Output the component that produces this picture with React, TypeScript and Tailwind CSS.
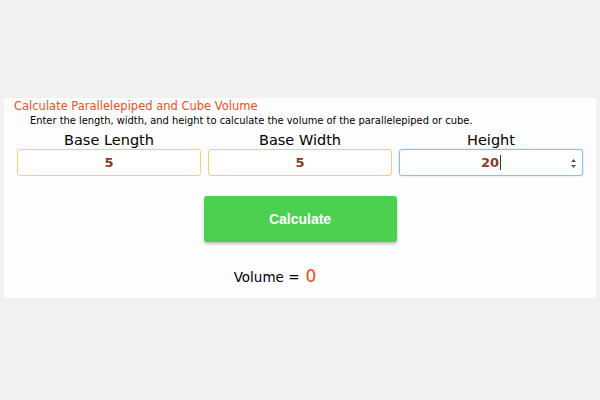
import React from 'react';

const comic = { fontFamily: '"Comic Sans MS", "DejaVu Sans", sans-serif' };

interface FieldProps {
  label: string;
  value: string;
  focused?: boolean;
}

const Field: React.FC<FieldProps> = ({ label, value, focused }) => {
  return (
    <div className="flex flex-col items-center">
      <label className="text-[14.5px] leading-[17px] text-black">{label}</label>
      <div
        className={`relative w-full h-[27px] rounded-[3px] bg-white flex items-center justify-center border ${
          focused ? 'border-[#8cc0e6] shadow-[0_0_2px_#a9d3f2]' : 'border-[#f5cf7e]'
        }`}
      >
        <span className="text-[13px] font-semibold text-[#8a3c1e]">{value}</span>
        {focused && <span className="w-px h-[15px] bg-[#333] ml-px"></span>}
        {focused && (
          <svg className="absolute right-[5px] top-[7px]" width="7" height="13" viewBox="0 0 7 13">
            <path d="M1 5 L3.5 2 L6 5 Z" fill="#555" />
            <path d="M1 8 L3.5 11 L6 8 Z" fill="#555" />
          </svg>
        )}
      </div>
    </div>
  );
};

export default function App() {
  return (
    <div className="w-[600px] h-[400px] bg-[#f1f1f1] pt-[98px] px-[4px]" style={comic}>
      <div className="bg-[#fdfdfd] h-[200px] pt-[1px]">
        <h1 className="text-[11.5px] leading-[15px] text-[#ef4f23] pl-[10px]">
          Calculate Parallelepiped and Cube Volume
        </h1>
        <p className="text-[9.9px] leading-[13px] text-black pl-[26px]">
          Enter the length, width, and height to calculate the volume of the parallelepiped or cube.
        </p>
        <div className="grid grid-cols-3 gap-x-[7px] px-[13px] mt-[5px]">
          <Field label="Base Length" value="5" />
          <Field label="Base Width" value="5" />
          <Field label="Height" value="20" focused />
        </div>
        <div className="flex justify-center mt-[20px]">
          <button
            className="w-[193px] h-[46px] rounded-[3px] bg-[#4cd04f] text-white text-[14px] font-bold shadow-[0_2px_3px_rgba(0,0,0,0.25)]"
            style={{ fontFamily: '"Liberation Sans", Arial, sans-serif' }}
          >
            Calculate
          </button>
        </div>
        <div className="flex justify-center items-baseline mt-[22px] pr-[50px]">
          <span className="text-[13.5px] text-black">Volume =</span>
          <span className="text-[17px] text-[#ef4a1b] ml-[6px]">0</span>
        </div>
      </div>
    </div>
  );
}
